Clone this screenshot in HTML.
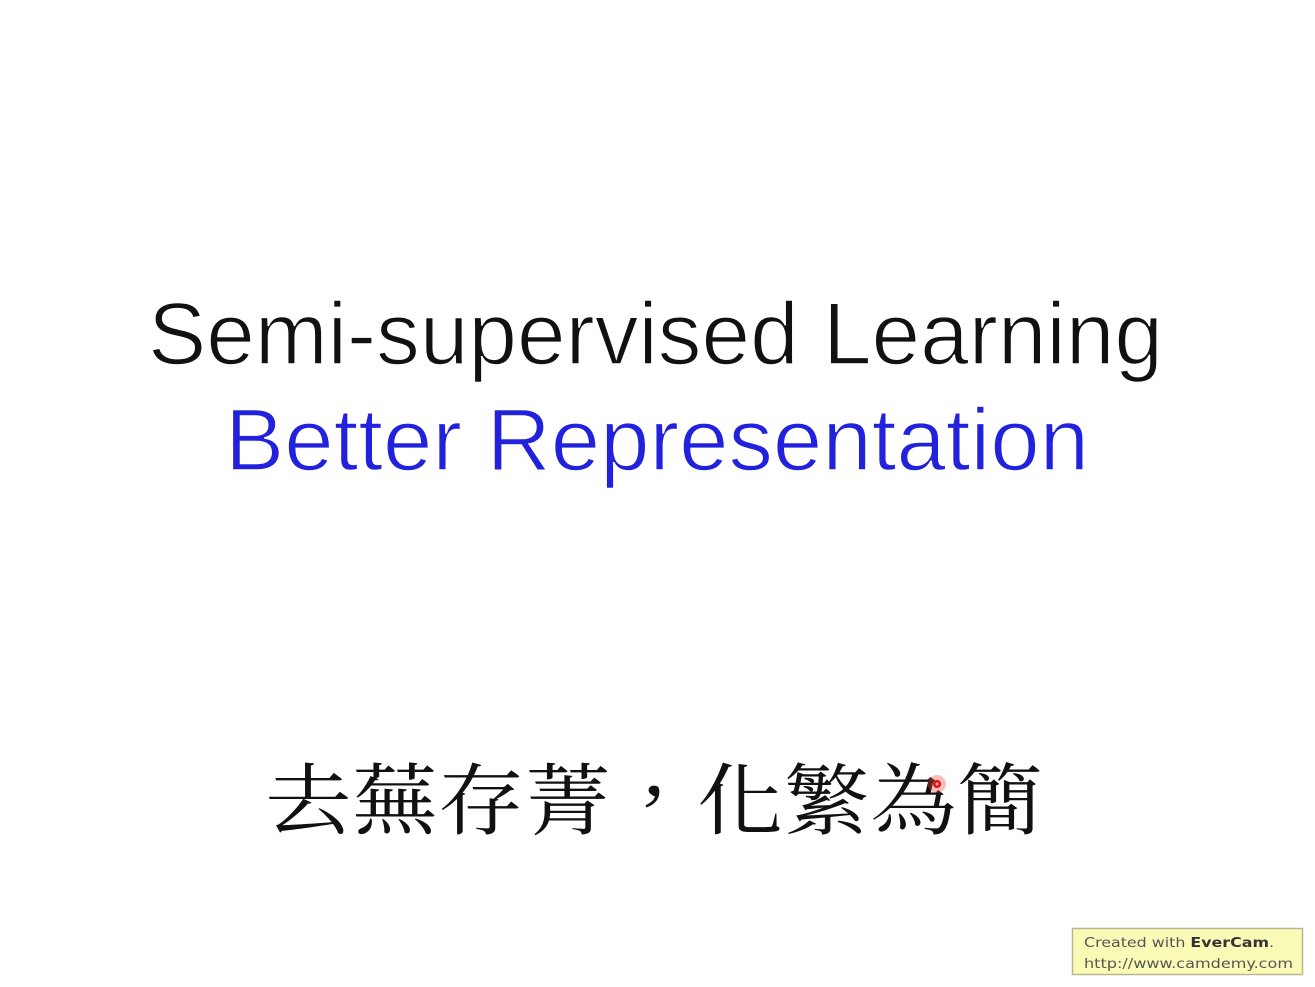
<!DOCTYPE html>
<html><head><meta charset="utf-8"><style>html,body{margin:0;padding:0;background:#fff;}svg{display:block}</style></head>
<body>
<svg width="1315" height="987" viewBox="0 0 1315 987" xmlns="http://www.w3.org/2000/svg">
<rect width="1315" height="987" fill="#fff"/>
<text x="148" y="364" font-family="Liberation Sans, sans-serif" font-size="88" fill="#111" stroke="#fff" stroke-width="1.6" textLength="1015" lengthAdjust="spacingAndGlyphs">Semi-supervised Learning</text>
<text x="225" y="470" font-family="Liberation Sans, sans-serif" font-size="88" fill="#2222dd" stroke="#fff" stroke-width="1.6" textLength="864" lengthAdjust="spacingAndGlyphs">Better Representation</text>
<text x="265" y="828" font-family="Noto Serif CJK TC, Noto Serif CJK SC, serif" font-size="78" fill="#111" textLength="778" lengthAdjust="spacingAndGlyphs">去蕪存菁，化繁為簡</text>
<circle cx="937" cy="784" r="9" fill="#ff4040" opacity="0.35"/>
<circle cx="937" cy="784" r="4" fill="#e01010"/>
<circle cx="937" cy="784" r="1.5" fill="#ffb0b0"/>
<rect x="1072.5" y="928.5" width="230" height="46" fill="#fbfbb8" stroke="#b8b890" stroke-width="1.5"/>
<text x="1084" y="947" font-family="DejaVu Sans, sans-serif" font-size="13.5" fill="#555" textLength="190" lengthAdjust="spacingAndGlyphs">Created with <tspan font-weight="bold" fill="#333">EverCam</tspan>.</text>
<text x="1084" y="968" font-family="DejaVu Sans, sans-serif" font-size="13.5" fill="#555" textLength="209" lengthAdjust="spacingAndGlyphs">http://www.camdemy.com</text>
</svg>
</body></html>
